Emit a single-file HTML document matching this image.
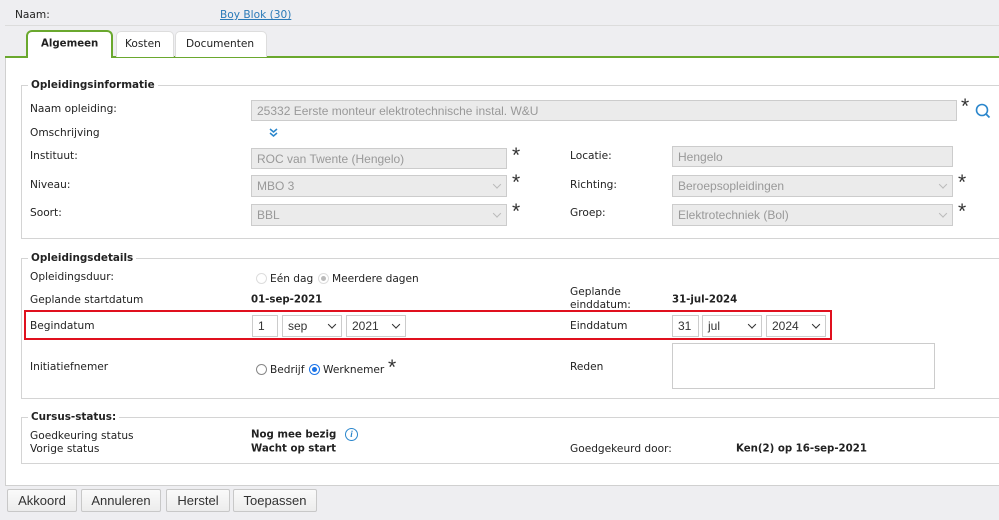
<!DOCTYPE html>
<html><head><meta charset="utf-8"><style>
body{margin:0;width:999px;height:520px;overflow:hidden;background:#eeeef1;font-family:"DejaVu Sans",Verdana,sans-serif;font-size:10.6px;color:#222;position:relative}
.a{position:absolute;white-space:nowrap}
.l{position:absolute;white-space:nowrap;transform:translateY(-50%)}
b,.bd{font-size:10.2px}
.in{position:absolute;box-sizing:border-box;border:1px solid #ccc;background:#ebebeb;color:#999;font-family:"Liberation Sans",Arial,sans-serif;font-size:12px;padding-left:5px;display:flex;align-items:center}
.w{background:#fff;color:#333;border-color:#ccc}
.chev{position:absolute;right:6px;top:50%;width:5px;height:5px;border-right:1.3px solid #bbb;border-bottom:1.3px solid #bbb;transform:translateY(-75%) rotate(45deg)}
.dk .chev{border-color:#333;border-width:1.8px}
.fs{position:absolute;border:1px solid #d4d4d4;border-right:none}
.lg{position:absolute;font-weight:bold;background:#fff;padding:0 3px;font-size:10.4px;transform:translateY(-50%)}
.ast{position:absolute;font-size:21px;color:#333;font-family:"Liberation Sans",sans-serif}
.btn{position:absolute;top:489px;height:23px;box-sizing:border-box;border:1px solid #c8c8c8;background:linear-gradient(#fafafa,#ececec);font-family:"Liberation Sans",Arial,sans-serif;font-size:13px;color:#333;display:flex;align-items:center;justify-content:center;border-radius:2px}
.rad{position:absolute;width:11px;height:11px;border-radius:50%;box-sizing:border-box;border:1px solid #ccc;background:#fff}
</style></head><body>
<div class="l" style="left:15px;top:15px">Naam:</div>
<div class="l" style="left:220px;top:15px;color:#2a7ab8;text-decoration:underline">Boy Blok (30)</div>
<div class="a" style="left:5px;top:25px;width:994px;height:1px;background:#dcdcdc"></div>
<div class="a" style="left:5px;top:57px;width:994px;height:428px;background:#fff;border-left:1px solid #d0d0d0;border-bottom:1px solid #d0d0d0"></div>
<div class="a" style="left:5px;top:56px;width:994px;height:2px;background:#6aa82e"></div>
<div class="a" style="left:116px;top:31px;width:56px;height:25px;background:#fff;border:1px solid #ddd;border-bottom:none;border-radius:5px 5px 0 0"></div>
<div class="l" style="left:125px;top:44px">Kosten</div>
<div class="a" style="left:175px;top:31px;width:90px;height:25px;background:#fff;border:1px solid #ddd;border-bottom:none;border-radius:5px 5px 0 0"></div>
<div class="l" style="left:186px;top:44px">Documenten</div>
<div class="a" style="left:26px;top:30px;width:87px;height:28px;background:#fff;border:2px solid #6aa82e;border-bottom:none;border-radius:6px 6px 0 0;box-sizing:border-box"></div>
<div class="l bd" style="left:41px;top:44px;font-weight:bold">Algemeen</div>

<div class="fs" style="left:21px;top:85px;width:978px;height:152px"></div>
<div class="lg" style="left:28px;top:85px">Opleidingsinformatie</div>
<div class="l" style="left:30px;top:109px">Naam opleiding:</div>
<div class="in" style="left:251px;top:100px;width:706px;height:21px">25332 Eerste monteur elektrotechnische instal. W&amp;U</div>
<div class="ast" style="left:961px;top:95px">*</div>
<svg class="a" style="left:975px;top:103px" width="16" height="16"><circle cx="7" cy="7" r="5.5" fill="none" stroke="#2a86cc" stroke-width="1.6"/><line x1="11" y1="11" x2="14.5" y2="14.5" stroke="#2a86cc" stroke-width="1.8"/></svg>
<div class="l" style="left:30px;top:133px">Omschrijving</div>
<svg class="a" style="left:269px;top:128px" width="9" height="10"><path d="M1 1l3.5 3 3.5-3M1 5l3.5 3 3.5-3" fill="none" stroke="#2a86cc" stroke-width="1.5"/></svg>
<div class="l" style="left:30px;top:156px">Instituut:</div>
<div class="in" style="left:251px;top:148px;width:256px;height:21px">ROC van Twente (Hengelo)</div>
<div class="ast" style="left:512px;top:144px">*</div>
<div class="l" style="left:570px;top:156px">Locatie:</div>
<div class="in" style="left:672px;top:146px;width:281px;height:21px">Hengelo</div>
<div class="l" style="left:30px;top:185px">Niveau:</div>
<div class="in" style="left:251px;top:175px;width:256px;height:22px">MBO 3<span class="chev"></span></div>
<div class="ast" style="left:512px;top:171px">*</div>
<div class="l" style="left:570px;top:185px">Richting:</div>
<div class="in" style="left:672px;top:175px;width:281px;height:22px">Beroepsopleidingen<span class="chev"></span></div>
<div class="ast" style="left:958px;top:171px">*</div>
<div class="l" style="left:30px;top:213px">Soort:</div>
<div class="in" style="left:251px;top:204px;width:256px;height:22px">BBL<span class="chev"></span></div>
<div class="ast" style="left:512px;top:200px">*</div>
<div class="l" style="left:570px;top:213px">Groep:</div>
<div class="in" style="left:672px;top:204px;width:281px;height:22px">Elektrotechniek (Bol)<span class="chev"></span></div>
<div class="ast" style="left:958px;top:200px">*</div>

<div class="fs" style="left:21px;top:258px;width:978px;height:139px"></div>
<div class="lg" style="left:28px;top:258px">Opleidingsdetails</div>
<div class="l" style="left:30px;top:277px">Opleidingsduur:</div>
<div class="rad" style="left:256px;top:273px;border-color:#ddd"></div>
<div class="l" style="left:270px;top:279px">Eén dag</div>
<div class="rad" style="left:318px;top:273px;border-color:#ddd"><div style="position:absolute;left:2px;top:2px;width:5px;height:5px;border-radius:50%;background:#bbb"></div></div>
<div class="l" style="left:332px;top:279px">Meerdere dagen</div>
<div class="l" style="left:30px;top:300px">Geplande startdatum</div>
<div class="l bd" style="left:251px;top:300px;font-weight:bold">01-sep-2021</div>
<div class="l" style="left:570px;top:292px">Geplande</div>
<div class="l" style="left:570px;top:305px">einddatum:</div>
<div class="l bd" style="left:672px;top:300px;font-weight:bold">31-jul-2024</div>
<div class="a" style="left:24px;top:310px;width:808px;height:30px;box-sizing:border-box;border:2px solid #e0101e"></div>
<div class="l" style="left:30px;top:326px">Begindatum</div>
<div class="in w" style="left:252px;top:315px;width:26px;height:22px">1</div>
<div class="in w dk" style="left:282px;top:315px;width:60px;height:22px">sep<span class="chev"></span></div>
<div class="in w dk" style="left:346px;top:315px;width:60px;height:22px">2021<span class="chev"></span></div>
<div class="l" style="left:570px;top:326px">Einddatum</div>
<div class="in w" style="left:672px;top:315px;width:27px;height:22px">31</div>
<div class="in w dk" style="left:702px;top:315px;width:60px;height:22px">jul<span class="chev"></span></div>
<div class="in w dk" style="left:766px;top:315px;width:60px;height:22px">2024<span class="chev"></span></div>
<div class="l" style="left:30px;top:367px">Initiatiefnemer</div>
<div class="rad" style="left:256px;top:364px;border-color:#888"></div>
<div class="l" style="left:270px;top:370px">Bedrijf</div>
<div class="rad" style="left:309px;top:364px;border-color:#1a73e8"><div style="position:absolute;left:2px;top:2px;width:5px;height:5px;border-radius:50%;background:#1a73e8"></div></div>
<div class="l" style="left:323px;top:370px">Werknemer</div>
<div class="ast" style="left:388px;top:356px">*</div>
<div class="l" style="left:570px;top:367px">Reden</div>
<div class="in w" style="left:672px;top:343px;width:263px;height:46px"></div>

<div class="fs" style="left:21px;top:417px;width:978px;height:45px"></div>
<div class="lg" style="left:28px;top:417px">Cursus-status:</div>
<div class="l" style="left:30px;top:436px">Goedkeuring status</div>
<div class="l bd" style="left:251px;top:435px;font-weight:bold">Nog mee bezig</div>
<div class="a" style="left:345px;top:428px;width:13px;height:13px;box-sizing:border-box;border:1.3px solid #2a86cc;border-radius:50%;color:#2a86cc;font-size:9px;font-style:italic;text-align:center;line-height:11px;font-family:'Liberation Serif',serif;font-weight:bold">i</div>
<div class="l" style="left:30px;top:449px">Vorige status</div>
<div class="l bd" style="left:251px;top:449px;font-weight:bold">Wacht op start</div>
<div class="l" style="left:570px;top:449px">Goedgekeurd door:</div>
<div class="l bd" style="left:736px;top:449px;font-weight:bold">Ken(2) op 16-sep-2021</div>

<div class="btn" style="left:7px;width:70px">Akkoord</div>
<div class="btn" style="left:81px;width:80px">Annuleren</div>
<div class="btn" style="left:166px;width:64px">Herstel</div>
<div class="btn" style="left:233px;width:84px">Toepassen</div>
</body></html>
